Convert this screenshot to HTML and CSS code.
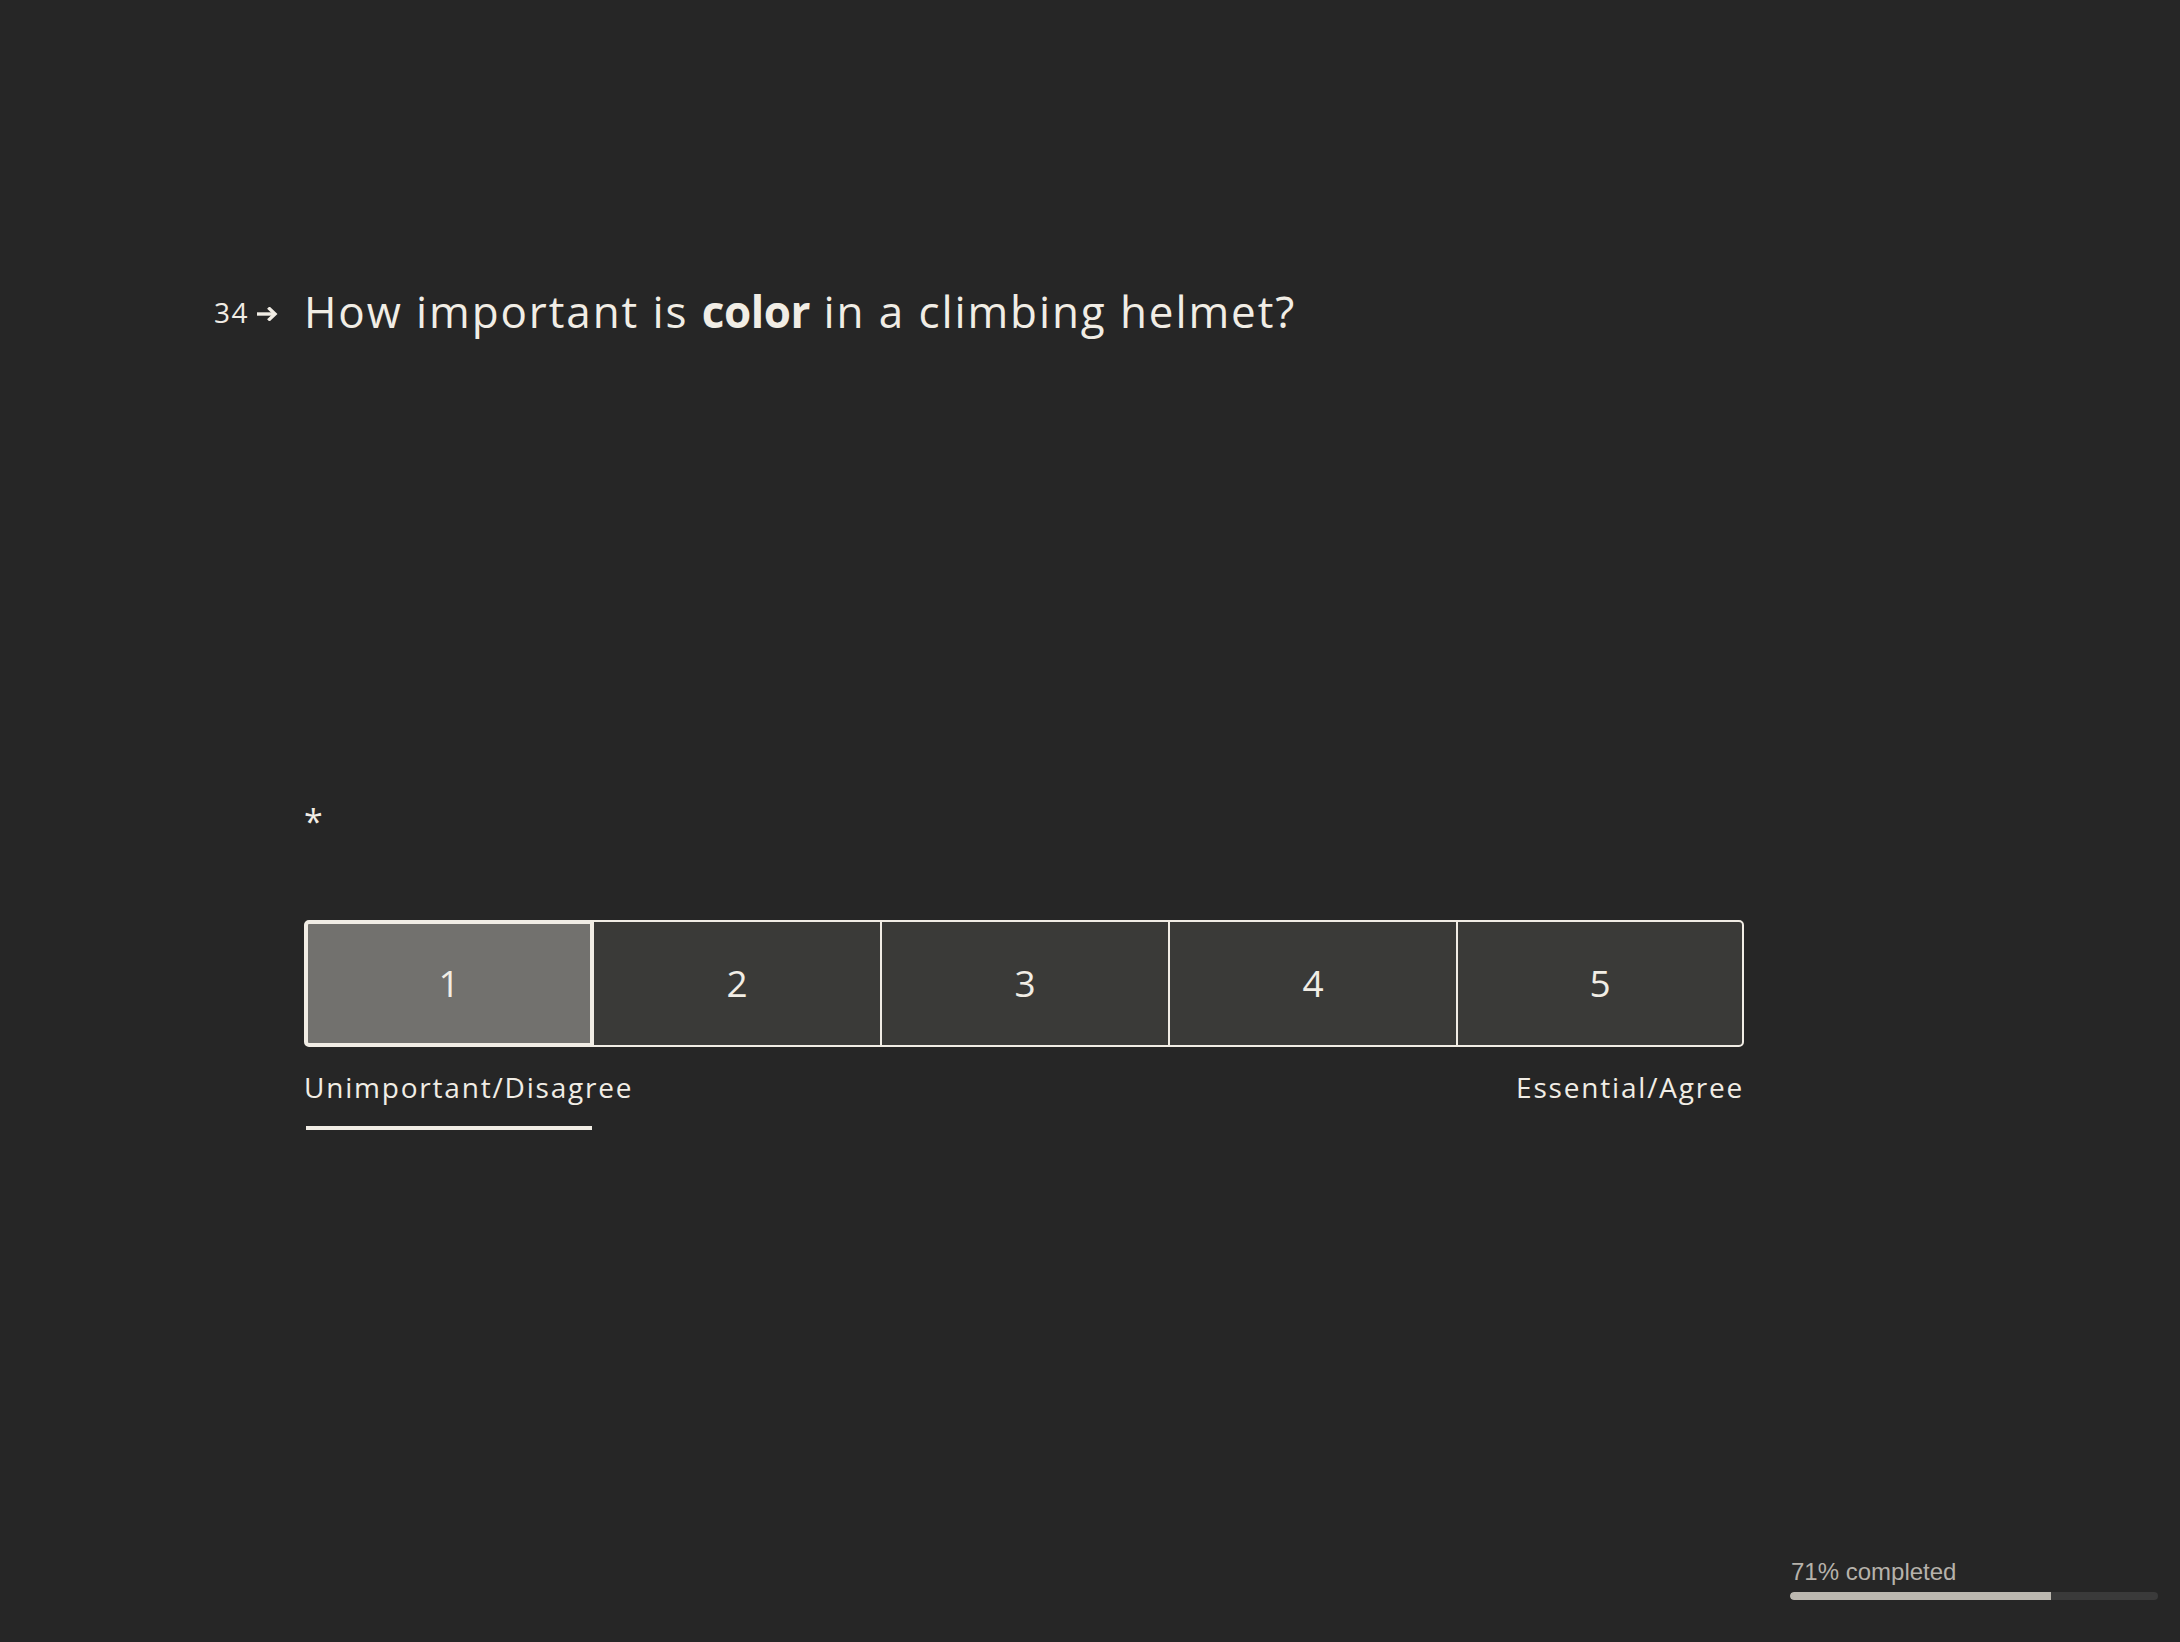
FILE: index.html
```html
<!DOCTYPE html>
<html lang="en">
<head>
<meta charset="utf-8">
<title>Climbing helmet survey</title>
<link rel="stylesheet" href="styles.css">
</head>
<body>
<div class="page">
  <main class="form">
    <div class="question">
      <div class="qnum">
        <span class="qnum-text">34</span>
        <svg class="arrow" width="21" height="14" viewBox="0 0 21 14" aria-hidden="true">
          <path d="M0 7H18" fill="none" stroke="currentColor" stroke-width="3.4"/>
          <path d="M12.5 1.8L18 7L12.5 12.2" fill="none" stroke="currentColor" stroke-width="3.4" stroke-linecap="square"/>
        </svg>
      </div>
      <h1 class="qtext">How important is <strong>color</strong> in a climbing helmet?</h1>
    </div>
    <div class="answer">
      <div class="required">*</div>
      <div class="scale">
        <div class="opt selected">1</div>
        <div class="opt">2</div>
        <div class="opt">3</div>
        <div class="opt">4</div>
        <div class="opt last">5</div>
      </div>
      <div class="labels">
        <span class="lbl">Unimportant/Disagree</span>
        <span class="lbl">Essential/Agree</span>
      </div>
      <div class="marker"><div class="marker-bar"></div></div>
    </div>
  </main>
  <footer class="progress">
    <div class="progress-text">71% completed</div>
    <div class="track"><div class="fill" style="width: 71%"></div></div>
  </footer>
</div>
</body>
</html>
```

FILE: styles.css
```css
html, body {
  margin: 0;
  padding: 0;
  background: #262626;
}

.page {
  min-height: 1642px;
  display: flex;
  flex-direction: column;
  color: #f1ede5;
  font-family: "Open Sans", "Noto Sans", sans-serif;
}

.form {
  padding-left: 214px;
  padding-top: 283px;
}

.question {
  display: flex;
  align-items: flex-start;
}

.qnum {
  width: 90px;
  height: 57px;
  display: flex;
  align-items: center;
  gap: 8px;
  font-size: 28px;
}

.qnum-text {
  letter-spacing: 1.5px;
}

.arrow {
  margin-top: 5px;
}

.qtext {
  margin: 0;
  font-size: 44px;
  line-height: 57px;
  font-weight: 400;
  letter-spacing: 1.9px;
}

.qtext strong {
  font-weight: 700;
  letter-spacing: -0.4px;
}

.answer {
  margin-left: 90px;
  width: 1440px;
  margin-top: 456px;
}

.required {
  height: 50px;
  font-size: 34px;
  line-height: 50px;
}

.scale {
  margin-top: 74px;
  display: grid;
  grid-template-columns: repeat(5, 1fr);
  height: 127px;
}

.opt {
  box-sizing: border-box;
  display: flex;
  align-items: center;
  justify-content: center;
  background: #3a3a38;
  border-top: 2px solid #f1ede5;
  border-bottom: 2px solid #f1ede5;
  border-left: 2px solid #f1ede5;
  font-size: 37px;
  padding-bottom: 2px;
}

.opt.last {
  border-right: 2px solid #f1ede5;
  border-radius: 0 5px 5px 0;
}

.opt.selected {
  position: relative;
  z-index: 1;
  margin-right: -2px;
  border: 4px solid #f1ede5;
  border-radius: 5px 0 0 5px;
  background: #72716e;
}

.labels {
  margin-top: 20px;
  display: flex;
  justify-content: space-between;
  font-size: 28px;
  line-height: 40px;
  letter-spacing: 1.8px;
}

.marker {
  margin-top: 19px;
  display: grid;
  grid-template-columns: repeat(5, 1fr);
}

.marker-bar {
  height: 4px;
  margin-left: 2px;
  background: #f1ede5;
}

.progress {
  margin-top: auto;
  align-self: flex-end;
  width: 368px;
  margin-right: 22px;
  margin-bottom: 42px;
}

.progress-text {
  font-family: "Liberation Sans", Arial, sans-serif;
  font-size: 24px;
  line-height: 28px;
  color: #b6b2ab;
  padding-left: 1px;
}

.track {
  margin-top: 6px;
  height: 8px;
  border-radius: 4px;
  background: #3a3a3a;
  overflow: hidden;
}

.fill {
  height: 100%;
  background: #bcb8b0;
  border-radius: 4px 0 0 4px;
}
```
